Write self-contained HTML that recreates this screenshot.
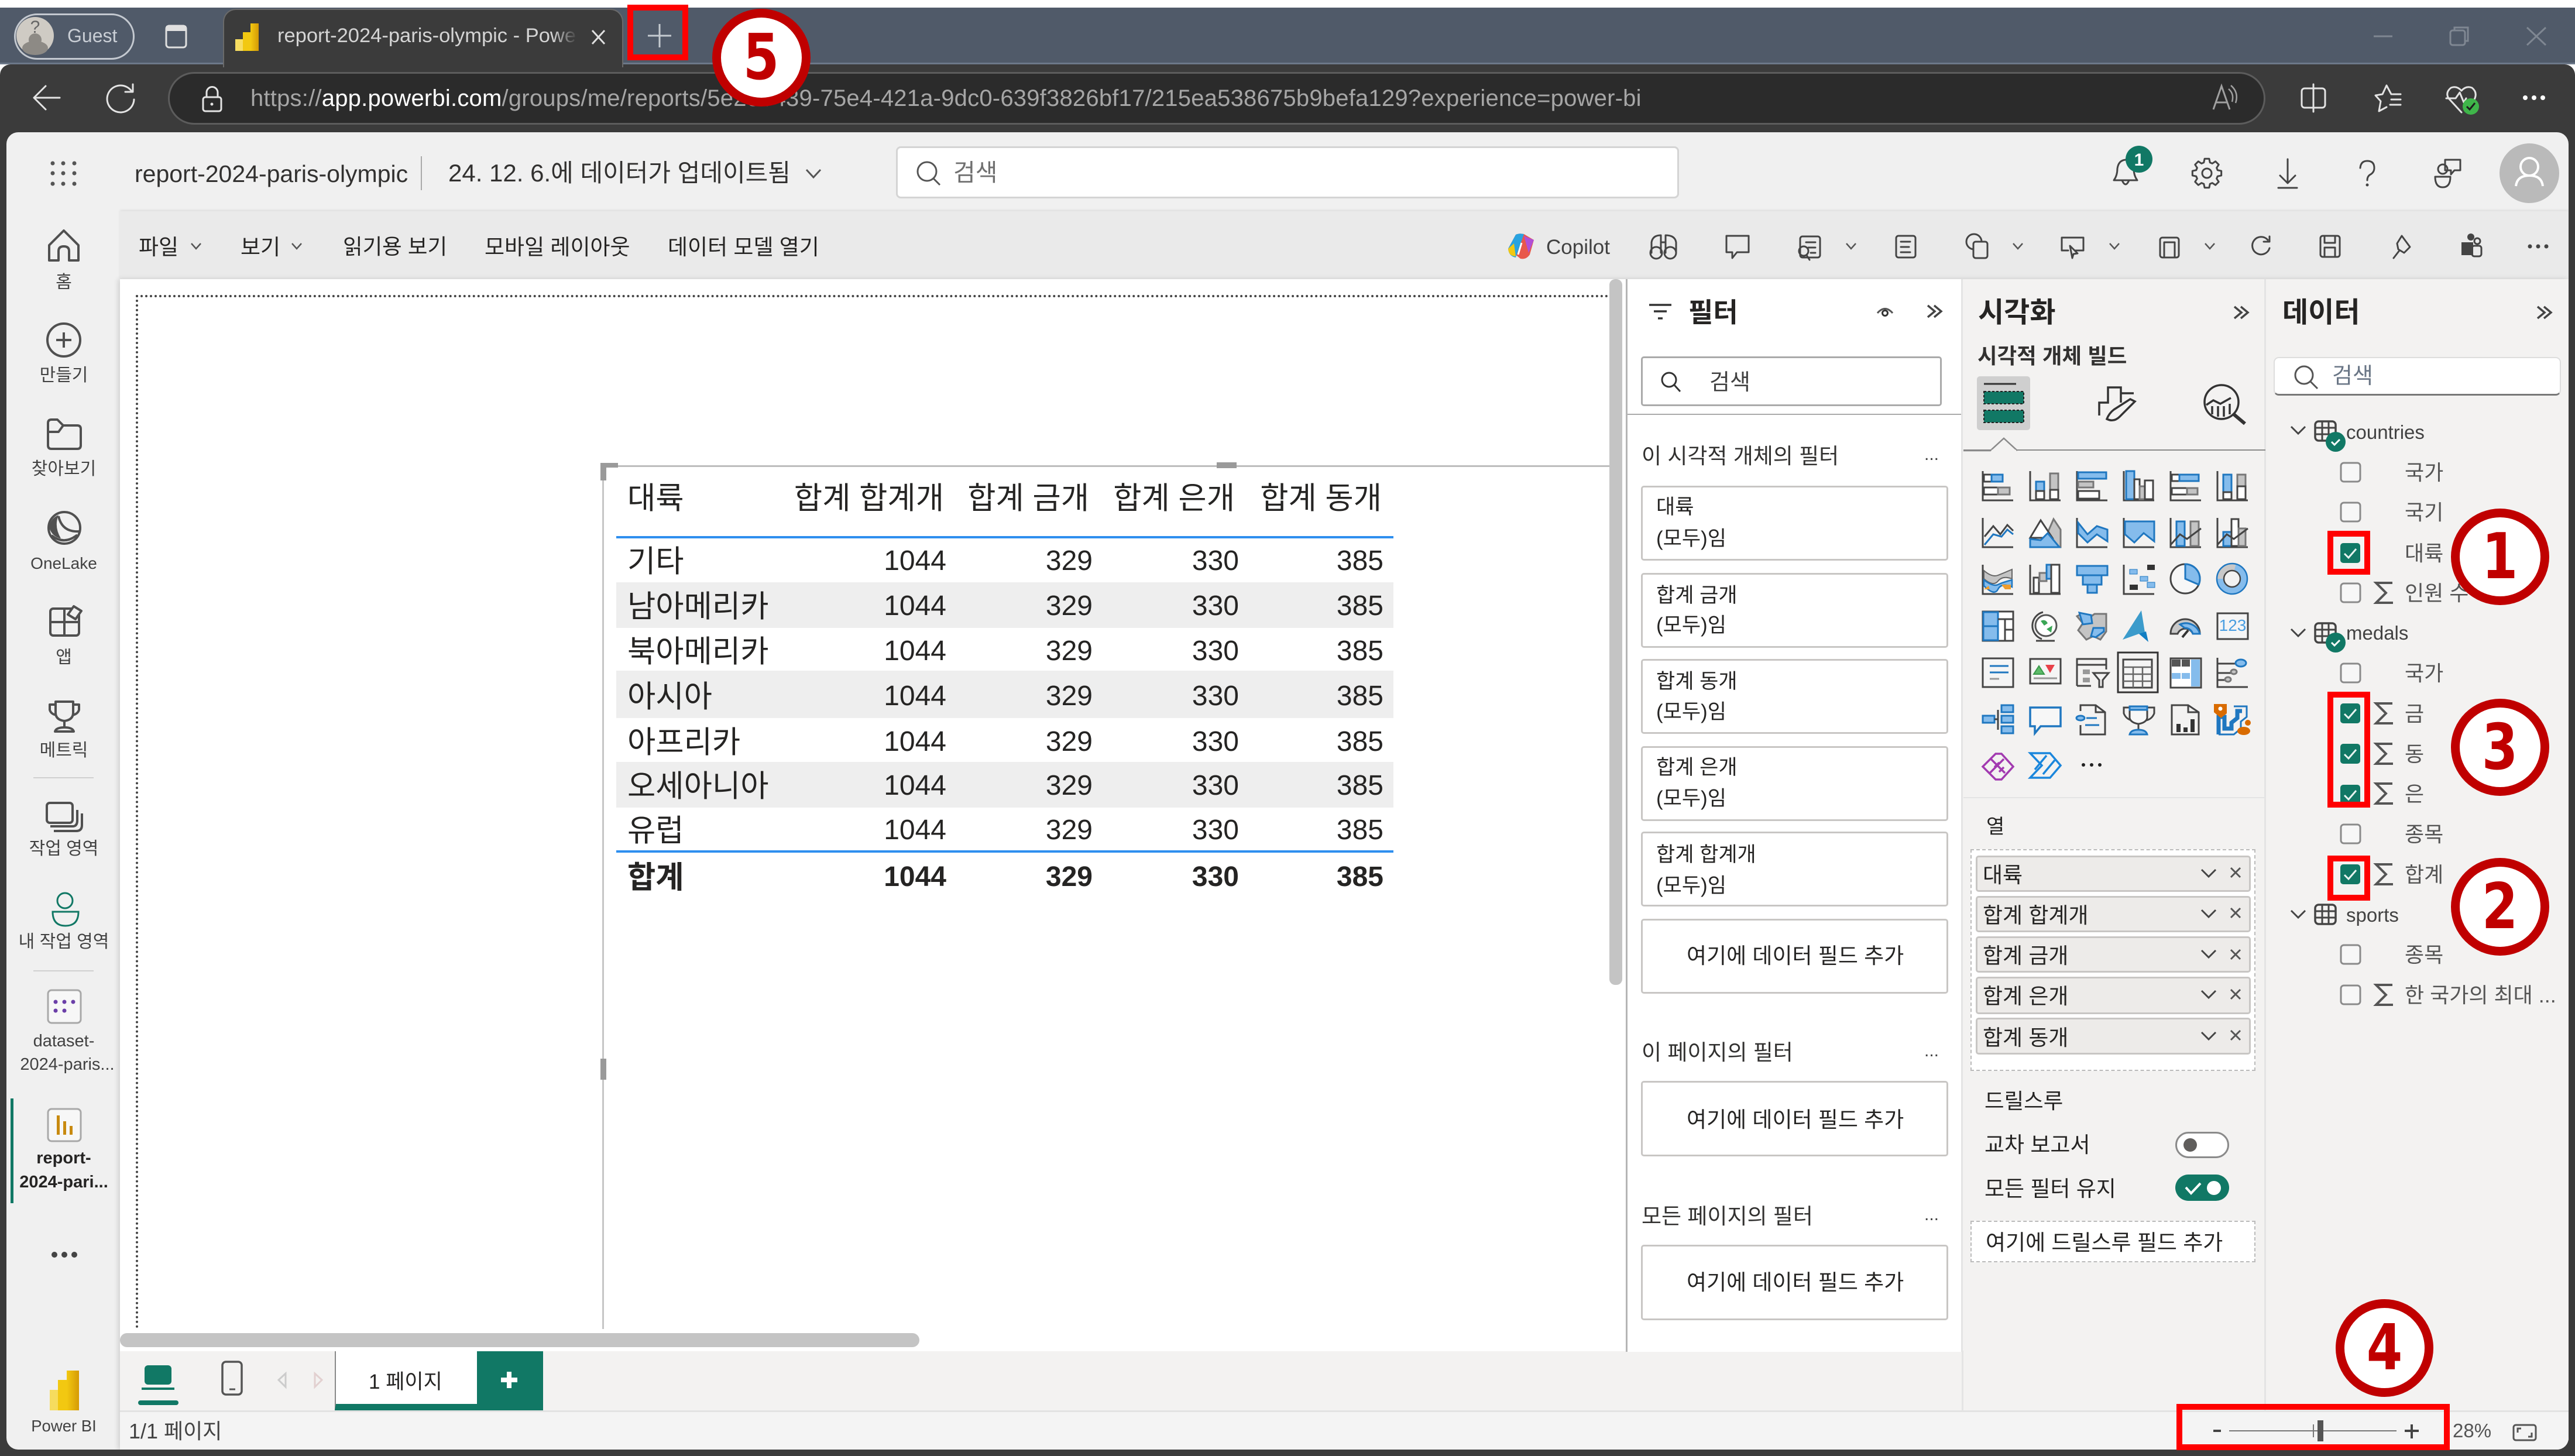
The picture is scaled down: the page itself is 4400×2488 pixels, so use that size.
<!DOCTYPE html>
<html lang="ko"><head><meta charset="utf-8"><title>report-2024-paris-olympic</title>
<style>
html,body{margin:0;padding:0}
body{width:4400px;height:2488px;position:relative;overflow:hidden;background:#fff;font-family:"Liberation Sans","Noto Sans CJK KR",sans-serif;color:#252423}
.b{position:absolute;box-sizing:border-box}
.t{position:absolute;line-height:1;white-space:nowrap}
.n{position:absolute;line-height:1;white-space:nowrap;left:11px;width:196px;text-align:center;font-size:30px;color:#424242}
.card{position:absolute;box-sizing:border-box;left:2804px;width:525px;background:#fff;border:3px solid #c8c6c4;border-radius:5px}
.fld{position:absolute;box-sizing:border-box;left:3376px;width:470px;background:#edebe9;border:3px solid #c8c6c4;border-radius:5px}
.red{position:absolute;box-sizing:border-box;border:10px solid #f00;z-index:5}
.circ{position:absolute;box-sizing:border-box;width:168px;background:#fff;border:15px solid #c00000;border-radius:50%;z-index:6;text-align:center;color:#c00000;font:bold 108px "DejaVu Sans",sans-serif;display:flex;align-items:center;justify-content:center}
.circ span{display:block;transform:scaleX(.82)}
.tr{position:absolute;left:0;width:4400px;height:0;font-size:48px;color:#252423}
.tr span{position:absolute;line-height:1;white-space:nowrap}
.c0{left:1072px;font-size:52.5px;margin-top:-1px}.c1{right:2783px}.c2{right:2533px}.c3{right:2283px}.c4{right:2036px}
.h span{font-size:52.5px}
.h .c1{right:2787px}.h .c2{right:2539px}.h .c3{right:2290px}.h .c4{right:2039px}
.tot{font-weight:bold}
svg text{font-family:"Liberation Sans",sans-serif}
.d{fill:none;stroke:#444;stroke-width:3;stroke-linecap:round;stroke-linejoin:round}
.l{fill:none;stroke:#e4e4e4;stroke-width:3;stroke-linecap:round;stroke-linejoin:round}
.a{fill:none;stroke:#444;stroke-width:3}
.bl{fill:#85bcec;stroke:#1f77c0;stroke-width:3}
.gr{fill:#c4c4c4;stroke:#777;stroke-width:3}
.w{fill:#fff;stroke:#444;stroke-width:3}
.li{fill:none;stroke:#1f77c0;stroke-width:3}
</style></head><body>

<!-- browser chrome -->
<div class="b" style="left:0;top:13px;width:4400px;height:97px;background:#505a69;border-bottom:3px solid #6c7889"></div>
<div class="b" style="left:0;top:110px;width:4400px;height:2378px;background:#3b3b3b;border-radius:18px 18px 0 0"></div>
<div class="b" style="left:381px;top:15px;width:684px;height:100px;background:#3b3b3b;border-radius:22px 22px 0 0;border:2px solid #6a6a6a;border-bottom:0"></div>
<div class="b" style="left:24px;top:23px;width:206px;height:79px;border:3px solid #c4c9d0;border-radius:40px"></div>
<div class="t" style="left:115px;top:45px;font-size:32px;color:#c9ced5">Guest</div>
<div class="t" style="left:474px;top:44px;font-size:34.500px;color:#d4d4d4;width:511px;overflow:hidden">report-2024-paris-olympic - Power BI</div>
<div class="b" style="left:945px;top:40px;width:42px;height:44px;background:linear-gradient(90deg,rgba(59,59,59,0),#3b3b3b)"></div>
<div class="b" style="left:287px;top:123px;width:3584px;height:90px;background:#2b2b2b;border:3px solid #5c5c5c;border-radius:45px"></div>
<div class="t" style="left:428px;top:148px;font-size:40px;letter-spacing:.21px;color:#a6a6a6">https://<span style="color:#fff">app.powerbi.com</span>/groups/me/reports/5e2e5439-75e4-421a-9dc0-639f3826bf17/215ea538675b9befa129?experience=power-bi</div>

<!-- app -->
<div class="b" style="left:0;top:0;width:4400px;height:2488px;clip-path:inset(226px 11px 11px 11px round 20px)">
  <div class="b" style="left:11px;top:226px;width:4378px;height:2251px;background:#f0f0f0"></div>
  <div class="b" style="left:205px;top:361px;width:4184px;height:116px;background:#eaeaea;box-shadow:0 -2px 4px rgba(0,0,0,.08)"></div>
  <div class="b" style="left:205px;top:477px;width:4184px;height:2000px;background:#fff;box-shadow:-3px 0 8px rgba(0,0,0,.14)"></div>
  <div class="b" style="left:205px;top:2309px;width:4184px;height:168px;background:#f3f2f1"></div>
  <div class="b" style="left:205px;top:2410px;width:4184px;height:67px;background:#f4f4f4;border-top:3px solid #e3e3e3"></div>
  <div class="b" style="left:2778px;top:477px;width:576px;height:1833px;background:#fff;border-left:3px solid #b5b5b5;border-right:3px solid #e4e4e4"></div>
  <div class="b" style="left:3354px;top:477px;width:518px;height:1933px;background:#f3f2f1;border-right:3px solid #e4e4e4"></div>
  <div class="b" style="left:3872px;top:477px;width:517px;height:1933px;background:#f3f2f1"></div>
  <div class="b" style="left:3352px;top:2308px;width:3px;height:102px;background:#e4e4e4"></div>
</div>

<!-- canvas -->
<div class="b" style="left:232px;top:504px;width:2518px;height:0;border-top:4px dotted #444"></div>
<div class="b" style="left:232px;top:504px;width:0;height:1767px;border-left:4px dotted #444"></div>
<div class="b" style="left:2750px;top:477px;width:22px;height:1206px;background:#c4c4c4;border-radius:10px"></div>
<div class="b" style="left:205px;top:2278px;width:1366px;height:24px;background:#c4c4c4;border-radius:12px"></div>

<!-- table visual -->
<div class="b" style="left:1028px;top:795px;width:1722px;height:3px;background:#bdbdbd"></div>
<div class="b" style="left:1029px;top:796px;width:3px;height:1475px;background:#c6c6c6"></div>
<div class="b" style="left:1026px;top:791px;width:30px;height:8px;background:#9a9a9a"></div>
<div class="b" style="left:1026px;top:791px;width:10px;height:30px;background:#9a9a9a"></div>
<div class="b" style="left:2079px;top:790px;width:34px;height:10px;background:#9a9a9a"></div>
<div class="b" style="left:1026px;top:1809px;width:10px;height:36px;background:#9a9a9a"></div>
<div class="b" style="left:1053px;top:995px;width:1328px;height:78px;background:#eee"></div>
<div class="b" style="left:1053px;top:1146px;width:1328px;height:81px;background:#eee"></div>
<div class="b" style="left:1053px;top:1302px;width:1328px;height:78px;background:#eee"></div>
<div class="b" style="left:1053px;top:916px;width:1328px;height:4px;background:#2e8fef"></div>
<div class="b" style="left:1053px;top:1453px;width:1328px;height:4px;background:#2e8fef"></div>
<div class="tr h" style="top:826px"><span class="c0" style="margin-top:0">대륙</span><span class="c1">합계 합계개</span><span class="c2">합계 금개</span><span class="c3">합계 은개</span><span class="c4">합계 동개</span></div>
<div class="tr" style="top:935px"><span class="c0">기타</span><span class="c1">1044</span><span class="c2">329</span><span class="c3">330</span><span class="c4">385</span></div>
<div class="tr" style="top:1012px"><span class="c0">남아메리카</span><span class="c1">1044</span><span class="c2">329</span><span class="c3">330</span><span class="c4">385</span></div>
<div class="tr" style="top:1089px"><span class="c0">북아메리카</span><span class="c1">1044</span><span class="c2">329</span><span class="c3">330</span><span class="c4">385</span></div>
<div class="tr" style="top:1166px"><span class="c0">아시아</span><span class="c1">1044</span><span class="c2">329</span><span class="c3">330</span><span class="c4">385</span></div>
<div class="tr" style="top:1244px"><span class="c0">아프리카</span><span class="c1">1044</span><span class="c2">329</span><span class="c3">330</span><span class="c4">385</span></div>
<div class="tr" style="top:1319px"><span class="c0">오세아니아</span><span class="c1">1044</span><span class="c2">329</span><span class="c3">330</span><span class="c4">385</span></div>
<div class="tr" style="top:1395px"><span class="c0">유럽</span><span class="c1">1044</span><span class="c2">329</span><span class="c3">330</span><span class="c4">385</span></div>
<div class="tr tot" style="top:1475px"><span class="c0">합계</span><span class="c1">1044</span><span class="c2">329</span><span class="c3">330</span><span class="c4">385</span></div>

<!-- header text -->
<div class="t" style="left:230px;top:277px;font-size:41px;color:#323130">report-2024-paris-olympic</div>
<div class="b" style="left:719px;top:267px;width:2px;height:58px;background:#aaa"></div>
<div class="t" style="left:766px;top:275px;font-size:42px;color:#323130">24. 12. 6.에 데이터가 업데이트됨</div>
<div class="b" style="left:1531px;top:250px;width:1338px;height:89px;background:#fff;border:3px solid #d4d4d4;border-radius:8px"></div>
<div class="t" style="left:1629px;top:275px;font-size:41px;color:#707070">검색</div>

<!-- ribbon text -->
<div class="t" style="left:237px;top:404px;font-size:37px">파일</div>
<div class="t" style="left:411px;top:404px;font-size:37px">보기</div>
<div class="t" style="left:586px;top:404px;font-size:36.500px">읽기용 보기</div>
<div class="t" style="left:828px;top:404px;font-size:37px">모바일 레이아웃</div>
<div class="t" style="left:1141px;top:404px;font-size:37px">데이터 모델 열기</div>
<div class="t" style="left:2642px;top:405px;font-size:35px;color:#424242">Copilot</div>

<!-- left nav text -->
<div class="n" style="top:468px">홈</div>
<div class="n" style="top:627px">만들기</div>
<div class="n" style="top:787px">찾아보기</div>
<div class="n" style="top:949px;font-size:28px">OneLake</div>
<div class="n" style="top:1109px">앱</div>
<div class="n" style="top:1268px">메트릭</div>
<div class="b" style="left:57px;top:1328px;width:103px;height:2px;background:#d0d0d0"></div>
<div class="n" style="top:1436px">작업 영역</div>
<div class="n" style="top:1595px">내 작업 영역</div>
<div class="b" style="left:57px;top:1658px;width:103px;height:2px;background:#d0d0d0"></div>
<div class="n" style="top:1765px;font-size:29px">dataset-</div>
<div class="n" style="top:1805px;left:17px;font-size:29px">2024-paris...</div>
<div class="n" style="top:1965px;font-weight:bold;color:#252423;font-size:29px">report-</div>
<div class="n" style="top:2006px;font-weight:bold;color:#252423;font-size:29px">2024-pari...</div>
<div class="b" style="left:18px;top:1877px;width:5px;height:179px;background:#117865"></div>
<div class="n" style="top:2423px;font-size:27.500px">Power BI</div>

<!-- pages bar -->
<div class="b" style="left:572px;top:2309px;width:243px;height:101px;background:#fff;border-left:2px solid #888;border-bottom:11px solid #117865"></div>
<div class="b" style="left:815px;top:2309px;width:113px;height:101px;background:#117865"></div>
<div class="t" style="left:630px;top:2344px;font-size:35px">1 페이지</div>
<div class="t" style="left:220px;top:2428px;font-size:36px;color:#424242">1/1 페이지</div>
<div class="t" style="left:4191px;top:2428px;font-size:33px;color:#555">28%</div>

<!-- filter pane -->
<div class="t" style="left:2885px;top:511px;font-size:46px;font-weight:bold">필터</div>
<div class="b" style="left:2804px;top:609px;width:514px;height:85px;background:#fff;border:3px solid #aaa;border-radius:5px"></div>
<div class="t" style="left:2921px;top:635px;font-size:38px;color:#424242">검색</div>
<div class="b" style="left:2781px;top:707px;width:570px;height:2px;background:#aaa"></div>
<div class="t" style="left:2805px;top:761px;font-size:37px;color:#323130">이 시각적 개체의 필터</div>
<div class="t" style="left:3288px;top:762px;font-size:30px;letter-spacing:0;color:#444">...</div>
<div class="card" style="top:830px;height:128px"></div>
<div class="t" style="left:2830px;top:849px;font-size:35px">대륙</div><div class="t" style="left:2830px;top:903px;font-size:35px">(모두)임</div>
<div class="card" style="top:979px;height:128px"></div>
<div class="t" style="left:2830px;top:1000px;font-size:35px">합계 금개</div><div class="t" style="left:2830px;top:1051px;font-size:35px">(모두)임</div>
<div class="card" style="top:1126px;height:128px"></div>
<div class="t" style="left:2830px;top:1147px;font-size:35px">합계 동개</div><div class="t" style="left:2830px;top:1199px;font-size:35px">(모두)임</div>
<div class="card" style="top:1275px;height:128px"></div>
<div class="t" style="left:2830px;top:1294px;font-size:35px">합계 은개</div><div class="t" style="left:2830px;top:1347px;font-size:35px">(모두)임</div>
<div class="card" style="top:1421px;height:128px"></div>
<div class="t" style="left:2830px;top:1443px;font-size:35px">합계 합계개</div><div class="t" style="left:2830px;top:1496px;font-size:35px">(모두)임</div>
<div class="card" style="top:1570px;height:128px"></div>
<div class="t" style="left:2882px;top:1615px;font-size:37px">여기에 데이터 필드 추가</div>
<div class="t" style="left:2805px;top:1780px;font-size:37px;color:#323130">이 페이지의 필터</div>
<div class="t" style="left:3288px;top:1781px;font-size:30px;color:#444">...</div>
<div class="card" style="top:1847px;height:129px"></div>
<div class="t" style="left:2882px;top:1895px;font-size:37px">여기에 데이터 필드 추가</div>
<div class="t" style="left:2805px;top:2060px;font-size:37px;color:#323130">모든 페이지의 필터</div>
<div class="t" style="left:3288px;top:2061px;font-size:30px;color:#444">...</div>
<div class="card" style="top:2127px;height:129px"></div>
<div class="t" style="left:2882px;top:2173px;font-size:37px">여기에 데이터 필드 추가</div>

<!-- viz pane -->
<div class="t" style="left:3380px;top:511px;font-size:48px;font-weight:bold">시각화</div>
<div class="t" style="left:3379px;top:591px;font-size:36.500px;font-weight:bold;color:#323130">시각적 개체 빌드</div>
<div class="b" style="left:3378px;top:643px;width:91px;height:92px;background:#cfcfcf;border-radius:5px"></div>
<div class="b" style="left:3355px;top:768px;width:516px;height:2px;background:#8a8a8a"></div>
<div class="b" style="left:3355px;top:1362px;width:516px;height:2px;background:#e4e4e4"></div>
<div class="t" style="left:3394px;top:1396px;font-size:34px">열</div>
<div class="b" style="left:3367px;top:1451px;width:487px;height:379px;background:#fff;border:2px dashed #bbb"></div>
<div class="fld" style="top:1462px;height:62px"></div>
<div class="fld" style="top:1531px;height:62px"></div>
<div class="fld" style="top:1600px;height:62px"></div>
<div class="fld" style="top:1669px;height:64px"></div>
<div class="fld" style="top:1739px;height:63px"></div>
<div class="t" style="left:3388px;top:1477px;font-size:37px">대륙</div>
<div class="t" style="left:3388px;top:1546px;font-size:37px">합계 합계개</div>
<div class="t" style="left:3388px;top:1615px;font-size:37px">합계 금개</div>
<div class="t" style="left:3388px;top:1684px;font-size:37px">합계 은개</div>
<div class="t" style="left:3388px;top:1755px;font-size:37px">합계 동개</div>
<div class="t" style="left:3391px;top:1864px;font-size:36.500px">드릴스루</div>
<div class="t" style="left:3391px;top:1938px;font-size:37px">교차 보고서</div>
<div class="t" style="left:3391px;top:2013px;font-size:37px">모든 필터 유지</div>
<div class="b" style="left:3717px;top:1934px;width:92px;height:45px;background:#fff;border:3px solid #8a8a8a;border-radius:23px"></div>
<div class="b" style="left:3731px;top:1945px;width:23px;height:23px;background:#605e5c;border-radius:50%"></div>
<div class="b" style="left:3717px;top:2007px;width:92px;height:45px;background:#117865;border-radius:23px"></div>
<div class="b" style="left:3771px;top:2018px;width:24px;height:24px;background:#fff;border-radius:50%"></div>
<div class="b" style="left:3367px;top:2086px;width:487px;height:71px;background:#fff;border:2px dashed #bbb"></div>
<div class="t" style="left:3393px;top:2105px;font-size:37px">여기에 드릴스루 필드 추가</div>

<!-- data pane -->
<div class="t" style="left:3900px;top:511px;font-size:48px;font-weight:bold">데이터</div>
<div class="b" style="left:3885px;top:610px;width:491px;height:66px;background:#fff;border:2px solid #ddd;border-bottom:3px solid #777;border-radius:9px"></div>
<div class="t" style="left:3985px;top:624px;font-size:38px;color:#6a7686">검색</div>
<div class="t" style="left:4009px;top:722px;font-size:33px;color:#424242">countries</div>
<div class="t" style="left:4009px;top:1065px;font-size:33px;color:#424242">medals</div>
<div class="t" style="left:4009px;top:1547px;font-size:33px;color:#424242">sports</div>
<div class="t" style="left:4109px;top:790px;font-size:36px;color:#555">국가</div>
<div class="t" style="left:4109px;top:858px;font-size:36px;color:#555">국기</div>
<div class="t" style="left:4109px;top:928px;font-size:36px;color:#555">대륙</div>
<div class="t" style="left:4109px;top:996px;font-size:36px;color:#555">인원 수</div>
<div class="t" style="left:4109px;top:1133px;font-size:36px;color:#555">국가</div>
<div class="t" style="left:4109px;top:1202px;font-size:36px;color:#555">금</div>
<div class="t" style="left:4109px;top:1271px;font-size:36px;color:#555">동</div>
<div class="t" style="left:4109px;top:1339px;font-size:36px;color:#555">은</div>
<div class="t" style="left:4109px;top:1408px;font-size:36px;color:#555">종목</div>
<div class="t" style="left:4109px;top:1477px;font-size:36px;color:#555">합계</div>
<div class="t" style="left:4109px;top:1614px;font-size:36px;color:#555">종목</div>
<div class="t" style="left:4109px;top:1683px;font-size:36px;color:#555">한 국가의 최대 ...</div>

<!-- icon layer -->
<svg class="b" style="left:0;top:0" width="4400" height="2488" viewBox="0 0 4400 2488">
<defs>
<linearGradient id="pb" x1="0" y1="0" x2="1" y2="0"><stop offset="0" stop-color="#f3c911"/><stop offset="1" stop-color="#d59a06"/></linearGradient>
<g id="cb"><rect x="-16" y="-16" width="33" height="32" rx="5" fill="#f7f7f7" stroke="#8a8a8a" stroke-width="3"/></g>
<g id="ck"><rect x="-17" y="-17" width="34" height="34" rx="5" fill="#117865"/><path d="M-10 1L-3 8L10-7" fill="none" stroke="#e8f4f0" stroke-width="3"/></g>
<path id="sg" d="M14-17H-14L3 0L-14 17H15" fill="none" stroke="#555" stroke-width="4"/>
<g id="tb"><rect x="0" y="0" width="35" height="33" rx="6" fill="none" stroke="#444" stroke-width="3.5"/><path d="M0 11H35M0 22H35M12 0V33M23 0V33" stroke="#444" stroke-width="3"/></g>
<g id="bd"><circle r="17" fill="#117865"/><path d="M-7 0L-2 5L7-4" fill="none" stroke="#fff" stroke-width="3"/></g>
<path id="cv" d="M-12-6L0 6L12-6" fill="none" stroke="#444" stroke-width="3"/>
<path id="cs" d="M-8-5L0 4L8-5" fill="none" stroke="#555" stroke-width="2.5"/>
<path id="xx" d="M-8-8L8 8M8-8L-8 8" stroke="#555" stroke-width="3"/>
<path id="dc" d="M-12-10L0 0L-12 10M-1-10L11 0L-1 10" fill="none" stroke="#444" stroke-width="3.5"/>
</defs>

<!-- chrome icons -->
<circle cx="60" cy="61" r="32" fill="#cfcbc4"/><circle cx="60" cy="48" r="15" fill="#cfcbc4"/><ellipse cx="60" cy="82" rx="22" ry="12" fill="#8d8a85"/><circle cx="60" cy="68" r="11" fill="#8d8a85"/>
<text x="60" y="56" font-size="30" text-anchor="middle" fill="#666">?</text>
<rect x="284" y="44" width="34" height="37" rx="5" fill="none" stroke="#e0e0e0" stroke-width="3"/><rect x="284" y="44" width="34" height="9" fill="#e0e0e0"/>
<rect x="402" y="67" width="14" height="20" fill="#f7dd62"/><rect x="415" y="55" width="14" height="32" fill="#f2c811"/><rect x="428" y="40" width="14" height="47" fill="url(#pb)"/>
<path d="M1012 52L1033 75M1033 52L1012 75" stroke="#e0e0e0" stroke-width="3"/>
<path d="M1127 41V81M1107 61H1147" stroke="#c5cad0" stroke-width="3"/>
<path d="M4056 62H4088" stroke="#7f8792" stroke-width="3"/>
<rect x="4187" y="52" width="25" height="25" rx="4" fill="none" stroke="#7f8792" stroke-width="3"/><path d="M4194 52V47H4217V70H4212" fill="none" stroke="#7f8792" stroke-width="3"/>
<path d="M4318 47L4350 77M4350 47L4318 77" stroke="#7f8792" stroke-width="3"/>
<path class="l" d="M102 167H59M78 147L58 167L78 187"/>
<path class="l" d="M225 156A23 23 0 1 0 229 170M227 144V157H214"/>
<rect x="347" y="166" width="31" height="24" rx="4" class="l"/><path class="l" d="M353 166V158A9.500 9.500 0 0 1 372 158V166"/><circle cx="362" cy="178" r="2.500" fill="#e4e4e4"/>
<path d="M3782 187L3796 147L3810 187M3787 175H3805" fill="none" stroke="#a0a0a0" stroke-width="3"/><path d="M3808 152Q3818 160 3814 174M3812 146Q3826 158 3820 176" fill="none" stroke="#a0a0a0" stroke-width="2.500"/>
<rect x="3933" y="151" width="40" height="33" rx="5" class="l"/><path class="l" d="M3953 144V191"/>
<path class="l" d="M4086 161L4078 146L4071 161L4059 163L4068 173L4065 190L4078 183M4088 161H4102M4086 170H4102M4084 179H4102"/>
<path class="l" d="M4206 192L4184 168Q4178 158 4188 150Q4198 146 4206 155Q4214 146 4224 150Q4234 158 4228 170M4180 168H4196L4203 158L4210 175L4214 168"/><circle cx="4222" cy="182" r="14" fill="#3fb54a"/><path d="M4215 182L4220 187L4229 176" fill="none" stroke="#1d1d1d" stroke-width="3"/>
<circle cx="4315" cy="167" r="4" fill="#fff"/><circle cx="4330" cy="167" r="4" fill="#fff"/><circle cx="4345" cy="167" r="4" fill="#fff"/>

<!-- header icons -->
<g fill="#555"><circle cx="90" cy="279" r="3.500"/><circle cx="108" cy="279" r="3.500"/><circle cx="127" cy="279" r="3.500"/><circle cx="90" cy="296" r="3.500"/><circle cx="108" cy="296" r="3.500"/><circle cx="127" cy="296" r="3.500"/><circle cx="90" cy="314" r="3.500"/><circle cx="108" cy="314" r="3.500"/><circle cx="127" cy="314" r="3.500"/></g>
<path d="M1378 290L1390 303L1402 290" fill="none" stroke="#555" stroke-width="3"/>
<circle cx="1584" cy="293" r="16" fill="none" stroke="#555" stroke-width="3"/><path d="M1595 305L1606 316" stroke="#555" stroke-width="3"/>
<path class="d" d="M3612 308Q3618 300 3618 288Q3620 274 3632 273Q3644 274 3646 288Q3646 300 3652 308ZM3626 308Q3632 322 3638 308"/>
<g transform="translate(3771 296)"><circle r="8" class="d"/><polygon class="d" points="18.26,-5.24 24.69,-3.91 24.69,3.91 18.26,5.24 16.62,9.21 20.23,14.69 14.69,20.23 9.21,16.62 5.24,18.26 3.91,24.69 -3.91,24.69 -5.24,18.26 -9.21,16.62 -14.69,20.23 -20.23,14.69 -16.62,9.21 -18.26,5.24 -24.69,3.91 -24.69,-3.91 -18.26,-5.24 -16.62,-9.21 -20.23,-14.69 -14.69,-20.23 -9.21,-16.62 -5.24,-18.26 -3.91,-24.69 3.91,-24.69 5.24,-18.26 9.21,-16.62 14.69,-20.23 20.23,-14.69 16.62,-9.21"/></g>
<path class="d" d="M3909 272V312M3896 300L3909 313L3922 300M3893 321H3925"/>
<path class="d" d="M4033 287Q4034 275 4045 275Q4057 275 4057 287Q4057 295 4049 299Q4045 302 4045 308"/><circle cx="4045" cy="316" r="2.500" fill="#444"/>
<circle cx="4174" cy="289" r="8" class="d"/><path class="d" d="M4161 302H4187Q4187 320 4174 320Q4161 320 4161 302ZM4178 273H4204V291H4194L4188 298V291H4178Z"/>
<circle cx="3655" cy="272" r="23" fill="#117865"/><text x="3655" y="283" font-size="30" font-weight="bold" text-anchor="middle" fill="#fff">1</text>
<circle cx="4322" cy="296" r="51" fill="#bababa"/><circle cx="4322" cy="285" r="15" fill="none" stroke="#fff" stroke-width="4"/><path d="M4299 318Q4301 300 4322 300Q4343 300 4345 318" fill="none" stroke="#fff" stroke-width="4"/>

<!-- ribbon icons -->
<use href="#cs" x="335" y="421"/><use href="#cs" x="507" y="421"/>
<path d="M2577 425L2590 401Q2596 398 2604 400L2621 410L2614 435Q2608 444 2598 442Z" fill="#e8574b"/><path d="M2577 425L2590 401Q2596 398 2604 400L2590 440Q2578 438 2577 425Z" fill="#29a3e0"/><path d="M2577 425L2587 416L2590 438Q2578 438 2577 425Z" fill="#f2c811"/><path d="M2604 403L2621 410L2612 432Z" fill="#b04fd6"/><path d="M2600 415L2594 435" stroke="#fff" stroke-width="3"/>
<g class="d"><path d="M2822 432V414Q2824 402 2838 402V432M2864 432V414Q2862 402 2846 402V432M2838 414H2846"/><circle cx="2830" cy="432" r="10"/><circle cx="2854" cy="432" r="10"/></g>
<path class="d" d="M2950 403H2988V431H2968L2960 441V431H2950Z"/>
<g class="d"><rect x="3076" y="404" width="34" height="36" rx="4"/><path d="M3086 414H3102M3090 423H3102M3094 432H3102"/><circle cx="3082" cy="429" r="8"/><path d="M3087 436L3092 444"/></g>
<use href="#cs" x="3163" y="421"/>
<g class="d"><rect x="3240" y="403" width="33" height="37" rx="4"/><path d="M3248 413H3264M3248 422H3262M3248 431H3264"/></g>
<g class="d"><circle cx="3373" cy="413" r="13"/><rect x="3372" y="413" width="24" height="28" rx="4" fill="#eaeaea"/></g><use href="#cs" x="3448" y="421"/>
<path class="d" d="M3523 406H3560V428H3546M3523 406V428H3534M3537 420L3550 433L3543 434L3541 441Z"/><use href="#cs" x="3613" y="421"/>
<g class="d"><rect x="3691" y="406" width="32" height="34" rx="4"/><path d="M3698 414H3716M3698 414V440M3716 414V440"/></g><use href="#cs" x="3776" y="421"/>
<path class="d" d="M3875 410A15 15 0 1 0 3878 424M3878 404V413H3868"/>
<g class="d"><rect x="3965" y="403" width="33" height="36" rx="4"/><path d="M3972 403V415H3990V403M3972 439V423H3990V439"/></g>
<path class="d" d="M4104 403L4118 422L4108 432L4098 426L4096 416ZM4100 428L4090 441"/>
<rect x="4206" y="414" width="20" height="22" fill="#444"/><circle cx="4233" cy="412" r="5" class="d"/><rect x="4224" y="420" width="16" height="18" rx="4" class="d"/><circle cx="4222" cy="405" r="6" fill="#444"/>
<circle cx="4323" cy="421" r="3.500" fill="#444"/><circle cx="4337" cy="421" r="3.500" fill="#444"/><circle cx="4351" cy="421" r="3.500" fill="#444"/>

<!-- nav icons -->
<g fill="none" stroke="#505050" stroke-width="4" stroke-linejoin="round">
<path d="M84 445V419L109 394L134 419V445H118V429Q118 421 109 421Q100 421 100 429V445Z"/>
<circle cx="109" cy="581" r="28"/><path d="M96 581H122M109 568V594"/>
<path d="M88 767H132Q138 767 138 761V733Q138 727 132 727H108L98 717H88Q82 717 82 723V761Q82 767 88 767ZM82 738H100L108 727"/>
<circle cx="110" cy="902" r="27"/><path d="M100 882Q106 910 136 908M88 915Q110 932 132 914"/>
<rect x="86" y="1040" width="49" height="46" rx="5"/><path d="M110 1040V1086M86 1063H135"/>
<path d="M95 1199H125V1218Q125 1230 110 1232Q95 1230 95 1218ZM95 1204H85V1213Q87 1220 96 1222M125 1204H135V1213Q133 1220 124 1222M110 1232V1243M94 1250Q96 1243 110 1243Q124 1243 126 1250Z"/>
<rect x="80" y="1372" width="44" height="34" rx="5"/><path d="M86 1412H124Q132 1412 132 1402V1384M92 1420H130Q140 1420 140 1410V1390"/>
</g>
<path d="M116 1050L126 1036L139 1044L129 1058L116 1050Z" fill="#f0f0f0" stroke="#505050" stroke-width="4" stroke-linejoin="round"/>
<path d="M84 902Q86 886 100 880Q92 900 104 920Q90 918 84 902Z" fill="#505050"/>
<g fill="none" stroke="#117865" stroke-width="3"><circle cx="111" cy="1539" r="13"/><path d="M90 1558H134Q134 1582 112 1582Q90 1582 90 1558Z"/></g>
<rect x="82" y="1692" width="56" height="56" rx="6" fill="#f7f7f7" stroke="#a8a8a8" stroke-width="3"/>
<g fill="#6b3fa8"><circle cx="95" cy="1712" r="3.500"/><circle cx="110" cy="1712" r="3.500"/><circle cx="125" cy="1712" r="3.500"/><circle cx="95" cy="1727" r="3.500"/><circle cx="110" cy="1727" r="3.500"/></g>
<rect x="82" y="1895" width="56" height="55" rx="6" fill="#f7f7f7" stroke="#a8a8a8" stroke-width="3"/>
<rect x="97" y="1906" width="5" height="33" fill="#c88a10"/><rect x="108" y="1916" width="5" height="23" fill="#c88a10"/><rect x="119" y="1924" width="5" height="15" fill="#c88a10"/>
<circle cx="93" cy="2144" r="5" fill="#444"/><circle cx="110" cy="2144" r="5" fill="#444"/><circle cx="127" cy="2144" r="5" fill="#444"/>
<rect x="85" y="2375" width="18" height="35" fill="#f6dc5e"/><rect x="99" y="2358" width="19" height="52" fill="#f2c811"/><rect x="114" y="2342" width="21" height="68" fill="url(#pb)"/>

<!-- page-bar icons -->
<rect x="247" y="2333" width="46" height="33" rx="6" fill="#117865"/><rect x="242" y="2371" width="56" height="4" fill="#117865"/><rect x="236" y="2393" width="69" height="8" rx="4" fill="#117865"/>
<rect x="380" y="2327" width="33" height="56" rx="6" fill="none" stroke="#555" stroke-width="3.500"/><path d="M392 2374H402" stroke="#555" stroke-width="3"/>
<path d="M488 2347L476 2358L488 2370Z" fill="none" stroke="#ccc" stroke-width="3"/><path d="M538 2347L550 2358L538 2370Z" fill="none" stroke="#e2d0d0" stroke-width="3"/>
<path d="M870 2344V2372M856 2358H884" stroke="#fff" stroke-width="8"/>
<path d="M3782 2445H3795" stroke="#444" stroke-width="4"/><path d="M3809 2445H4095" stroke="#777" stroke-width="2"/><rect x="3960" y="2427" width="10" height="36" fill="#555"/><path d="M3953 2434V2456" stroke="#777" stroke-width="2"/><path d="M4121 2434V2458M4109 2445H4133" stroke="#444" stroke-width="4"/>
<rect x="4295" y="2435" width="38" height="26" rx="4" fill="none" stroke="#555" stroke-width="3"/><path d="M4302 2448V2441H4308M4326 2448V2455H4320" fill="none" stroke="#555" stroke-width="3"/>

<!-- pane heads -->
<path d="M2818 521H2856M2826 532H2848M2833 544H2841" stroke="#333" stroke-width="3.500"/>
<path d="M3208 535Q3221 520 3234 535" fill="none" stroke="#555" stroke-width="3"/><circle cx="3221" cy="535" r="4.500" fill="none" stroke="#333" stroke-width="3"/>
<use href="#dc" x="3306" y="532"/><use href="#dc" x="3830" y="534"/><use href="#dc" x="4348" y="534"/>
<circle cx="2852" cy="649" r="12" fill="none" stroke="#333" stroke-width="3"/><path d="M2861 658L2871 669" stroke="#333" stroke-width="3"/>
<circle cx="3937" cy="641" r="15" fill="none" stroke="#555" stroke-width="3"/><path d="M3948 652L3960 664" stroke="#555" stroke-width="3"/>

<!-- viz tabs -->
<path d="M3390 656H3445" stroke="#333" stroke-width="3"/>
<rect x="3390" y="669" width="68" height="21" fill="#117865" stroke="#222" stroke-width="2" stroke-dasharray="4 3"/><rect x="3390" y="701" width="68" height="21" fill="#117865" stroke="#222" stroke-width="2" stroke-dasharray="4 3"/>
<g fill="none" stroke="#333" stroke-width="3.500"><path d="M3587 710V688H3602V662H3624V672H3646M3624 672V688"/><path d="M3600 716Q3612 722 3622 712L3648 686L3640 682L3612 700Q3604 706 3600 716Z"/>
<circle cx="3796" cy="687" r="29"/><path d="M3770 692L3782 684L3794 690L3812 680M3780 694V708M3790 694V712M3800 694V712M3810 690V708"/><path d="M3817 708L3836 724" stroke-width="6"/></g>
<path d="M3355 770H3401L3424 749L3447 770" fill="#f3f2f1" stroke="#8a8a8a" stroke-width="2.500"/><path d="M3403 770H3445" stroke="#f3f2f1" stroke-width="3"/>

<!-- viz grid -->
<g transform="translate(3386 803)"><path class="a" d="M2 2V52H54"/><rect class="w" x="4" y="8" width="13" height="12"/><rect class="bl" x="17" y="8" width="19" height="12"/><rect class="w" x="4" y="30" width="24" height="12"/><rect class="gr" x="28" y="30" width="20" height="12"/></g>
<g transform="translate(3467 803)"><path class="a" d="M2 2V52H54"/><rect class="bl" x="12" y="20" width="14" height="16"/><rect class="w" x="12" y="36" width="14" height="14"/><rect class="gr" x="36" y="6" width="14" height="28"/><rect class="w" x="36" y="34" width="14" height="16"/></g>
<g transform="translate(3547 803)"><path class="a" d="M2 2V52H54"/><rect class="bl" x="4" y="4" width="48" height="11"/><rect class="gr" x="4" y="20" width="26" height="10"/><rect class="w" x="4" y="36" width="36" height="13"/></g>
<g transform="translate(3627 803)"><path class="a" d="M2 2V52H54"/><rect class="bl" x="6" y="2" width="14" height="48"/><rect class="w" x="20" y="16" width="9" height="34"/><rect class="gr" x="29" y="28" width="9" height="22"/><rect class="w" x="38" y="18" width="14" height="32"/></g>
<g transform="translate(3707 803)"><path class="a" d="M2 2V52H54"/><rect class="w" x="4" y="8" width="13" height="11"/><rect class="bl" x="17" y="8" width="33" height="11"/><rect class="w" x="4" y="31" width="26" height="11"/><rect class="gr" x="30" y="31" width="18" height="11"/></g>
<g transform="translate(3787 803)"><path class="a" d="M2 2V52H54"/><rect class="bl" x="12" y="8" width="14" height="30"/><rect class="w" x="12" y="38" width="14" height="12"/><rect class="gr" x="36" y="8" width="14" height="20"/><rect class="w" x="36" y="28" width="14" height="22"/></g>

<g transform="translate(3386 883)"><path class="a" d="M2 2V52H54"/><path class="a" d="M5 34L20 16L32 30L44 14L54 24"/><path class="li" d="M5 48L20 30L34 34L44 22L54 30"/></g>
<g transform="translate(3467 883)"><path class="gr" d="M28 36L42 4L54 22V52H40Z"/><path class="w" d="M2 36L20 6L40 36Z" stroke="#555"/><path class="bl" d="M2 52V38L20 40L32 28L52 52Z"/></g>
<g transform="translate(3547 883)"><path class="a" d="M2 2V52H54"/><path class="bl" d="M4 10L20 30L36 16L54 22V42L36 30L20 44L4 28Z"/></g>
<g transform="translate(3627 883)"><path class="a" d="M2 2V52H54"/><path class="bl" d="M4 8H54V42L36 28L20 44L4 30Z"/></g>
<g transform="translate(3707 883)"><path class="a" d="M2 2V52H54"/><rect class="bl" x="12" y="8" width="14" height="42"/><rect class="gr" x="36" y="8" width="14" height="42"/><path class="a" d="M2 48L18 30L30 38L54 20"/></g>
<g transform="translate(3787 883)"><path class="a" d="M2 2V52H54"/><rect class="bl" x="12" y="26" width="14" height="24"/><rect class="w" x="26" y="4" width="12" height="46"/><rect class="gr" x="38" y="20" width="12" height="30"/><path class="a" d="M2 48L18 30L30 38L54 20"/></g>

<g transform="translate(3386 963)"><path class="a" d="M2 2V52H54"/><path d="M4 12Q18 24 28 20T52 10V26Q36 20 28 30T4 26Z" fill="#c4c4c4" stroke="#666" stroke-width="2"/><path d="M4 28Q20 40 28 36T52 28V40Q34 32 28 44T4 38Z" fill="#85bcec" stroke="#1f77c0" stroke-width="2.500"/><path d="M4 44H14L12 38ZM34 36H50V44H40Z" fill="#ef9d2e"/></g>
<g transform="translate(3467 963)"><path class="a" d="M2 2V52H54"/><rect class="w" x="8" y="24" width="9" height="26"/><rect class="gr" x="18" y="16" width="12" height="14"/><rect class="bl" x="30" y="2" width="8" height="24"/><rect class="w" x="38" y="2" width="14" height="48"/></g>
<g transform="translate(3547 963)"><path class="bl" d="M2 4H54V20H44V36H36V50H20V36H12V20H2Z"/><path class="li" d="M12 20H44M20 36H36"/></g>
<g transform="translate(3627 963)"><path class="a" d="M2 2V52H54"/><rect x="12" y="10" width="13" height="8" fill="#85bcec" stroke="#1f77c0" stroke-width="1"/><rect x="30" y="22" width="13" height="8" fill="#85bcec" stroke="#1f77c0" stroke-width="1"/><rect x="42" y="2" width="13" height="9" fill="#333"/><rect x="12" y="36" width="14" height="9" fill="#333"/><rect x="42" y="32" width="13" height="9" fill="#85bcec" stroke="#1f77c0" stroke-width="1"/></g>
<g transform="translate(3707 963)"><circle cx="27" cy="26" r="25" fill="#f7f7f7" stroke="#444" stroke-width="3"/><path class="bl" d="M27 26V1A25 25 0 0 1 50 36Z"/></g>
<g transform="translate(3787 963)"><circle cx="27" cy="26" r="20" fill="none" stroke="#c8c8c8" stroke-width="11"/><path d="M7 26A20 20 0 1 0 47 26A20 20 0 0 0 32 7" fill="none" stroke="#85bcec" stroke-width="11"/><circle cx="27" cy="26" r="26" fill="none" stroke="#1f77c0" stroke-width="2.500"/><circle cx="27" cy="26" r="14" fill="none" stroke="#444" stroke-width="2.500"/></g>

<g transform="translate(3386 1043)"><rect x="2" y="2" width="52" height="50" fill="#fff" stroke="#444" stroke-width="3"/><rect x="3" y="3" width="25" height="24" class="bl"/><rect x="3" y="27" width="25" height="24" class="bl"/><path class="a" d="M28 15H54M40 15V52M40 33H54"/></g>
<g transform="translate(3467 1043)"><circle cx="29" cy="26" r="18" fill="#fff" stroke="#555" stroke-width="3"/><path d="M20 18Q28 14 32 22L26 26ZM30 32L40 26L38 38Z" fill="#3aa655"/><path class="a" d="M24 3A24 24 0 0 0 22 49M12 52H44"/></g>
<g transform="translate(3547 1043)"><path class="gr" d="M2 10L12 22L4 34L18 50L30 44L42 50L52 36V6H32L24 12L10 6Z"/><path class="bl" d="M6 4L26 8L28 22L12 24ZM30 30H48V36L34 46L26 44Z"/></g>
<g transform="translate(3627 1043)"><path d="M0 50L32 0L40 50L28 40Z" fill="#3b9bcb"/><path d="M28 40L40 36L44 54Z" fill="#117ec2"/></g>
<g transform="translate(3707 1043)"><path d="M2 40A25 25 0 0 1 52 40H40A14 14 0 0 0 14 40Z" fill="#c8c8c8" stroke="#444" stroke-width="3"/><path class="bl" d="M18 24A25 25 0 0 1 52 40H40A14 14 0 0 0 26 30Z"/><path d="M22 46L32 34" stroke="#333" stroke-width="4"/></g>
<g transform="translate(3787 1043)"><rect x="2" y="5" width="52" height="44" fill="#f5f5f5" stroke="#444" stroke-width="3"/><text x="28" y="35" font-size="28" text-anchor="middle" fill="#4a9ee0">123</text></g>

<g transform="translate(3386 1122)"><rect x="2" y="3" width="52" height="49" fill="#f5f5f5" stroke="#444" stroke-width="3"/><path d="M14 16H46M14 27H46" stroke="#1f77c0" stroke-width="3"/><path d="M14 38H30" stroke="#999" stroke-width="3"/></g>
<g transform="translate(3467 1122)"><rect x="2" y="4" width="52" height="42" fill="#f5f5f5" stroke="#444" stroke-width="3"/><path d="M8 30L17 16L26 30Z" fill="#5dbb6a" stroke="#3a9a4b" stroke-width="2"/><path d="M28 14H44L36 28Z" fill="#e8414a"/><path d="M8 37H48" stroke="#999" stroke-width="3"/></g>
<g transform="translate(3547 1122)"><path class="a" d="M2 50V4H52V22M2 50H26M2 14H52"/><rect x="12" y="22" width="12" height="8" fill="#999"/><rect x="12" y="36" width="12" height="8" fill="#999"/><path d="M30 28H56L46 40V52H40V40Z" fill="#f3f2f1" stroke="#444" stroke-width="3"/></g>
<rect x="3619" y="1115" width="68" height="68" fill="none" stroke="#333" stroke-width="3"/>
<g transform="translate(3628 1127)"><rect x="0" y="0" width="49" height="48" fill="#f5f5f5" stroke="#444" stroke-width="3"/><path d="M0 13H49M0 25H49M0 37H49M17 13V48M33 13V48" stroke="#666" stroke-width="2.500"/></g>
<g transform="translate(3707 1122)"><rect x="2" y="3" width="52" height="50" fill="#fff" stroke="#444" stroke-width="3"/><rect x="4" y="5" width="48" height="12" fill="#555"/><rect x="36" y="5" width="16" height="46" fill="#85bcec"/><rect x="4" y="28" width="48" height="10" fill="#85bcec"/><path d="M20 5V51M36 5V51" stroke="#fff" stroke-width="2"/></g>
<g transform="translate(3787 1122)"><path class="a" d="M2 2V52H54M2 12H40M2 28H28M2 40H18" /><ellipse cx="42" cy="11" rx="9" ry="6" class="bl"/><ellipse cx="30" cy="26" rx="5" ry="4" class="gr"/><ellipse cx="20" cy="39" rx="5" ry="4" class="gr"/></g>

<g transform="translate(3386 1203)"><rect x="2" y="20" width="20" height="12" class="bl"/><path class="a" d="M22 26H28M28 10V44"/><rect x="34" y="2" width="20" height="12" class="bl"/><rect x="34" y="20" width="20" height="12" class="bl"/><rect x="34" y="38" width="20" height="12" class="bl"/></g>
<g transform="translate(3467 1203)"><path d="M2 6H54V38H20L10 50V38H2Z" fill="#f7f7f7" stroke="#1f77c0" stroke-width="3.500"/></g>
<g transform="translate(3547 1203)"><path class="a" d="M8 12V2H34L50 14V52H8V36"/><path class="a" d="M34 2V14H50"/><ellipse cx="8" cy="24" rx="7" ry="4" class="bl"/><path class="li" d="M18 24H36M16 36H40"/></g>
<g transform="translate(3627 1203)"><path class="a" d="M12 6H2V16Q6 26 16 28M42 6H54V16Q50 26 40 28"/><path d="M12 4H42V24Q40 32 27 34Q14 32 12 24Z" fill="#f7f7f7" stroke="#444" stroke-width="3"/><path d="M12 4H42V10H12Z" fill="#85bcec" stroke="#1f77c0" stroke-width="3"/><path d="M27 34V44" stroke="#444" stroke-width="3"/><path class="bl" d="M12 52Q14 44 27 44Q40 44 42 52Z"/></g>
<g transform="translate(3707 1203)"><path class="a" d="M4 52V2H32L50 14V52ZM32 2V14H50"/><rect x="12" y="34" width="7" height="14" fill="#333"/><rect x="24" y="40" width="7" height="8" fill="#333"/><rect x="36" y="26" width="7" height="22" fill="#333"/></g>
<g transform="translate(3787 1203)"><path d="M4 52V22H14V42H26V32L36 24V12H44" fill="none" stroke="#1f77c0" stroke-width="7"/><path d="M4 52H30L42 42V30L52 22V4H30" fill="none" stroke="#1f77c0" stroke-width="3"/><path d="M-4 0H18V16L8 24L-4 14Z" fill="#d96b00"/><circle cx="7" cy="8" r="3.500" fill="#fff"/><ellipse cx="47" cy="46" rx="11" ry="7" fill="#d96b00"/><circle cx="54" cy="32" r="5" fill="#d96b00"/></g>

<g transform="translate(3386 1283)" fill="none" stroke="#a23ab0" stroke-width="3.500"><path d="M2 27L24 5H34L54 27L34 49H24ZM16 14L40 38M38 14L14 38M22 28L30 20M30 36L38 28"/></g>
<g transform="translate(3467 1283)" fill="none" stroke="#1a86dc" stroke-width="3.500"><path d="M2 4H36L54 25L36 46H2L22 25ZM10 32L30 8M24 40L44 16"/></g>
<circle cx="3560" cy="1307" r="3" fill="#222"/><circle cx="3574" cy="1307" r="3" fill="#222"/><circle cx="3588" cy="1307" r="3" fill="#222"/>

<!-- field icons -->
<use href="#cv" x="3774" y="1492"/><use href="#xx" x="3820" y="1491"/>
<use href="#cv" x="3774" y="1561"/><use href="#xx" x="3820" y="1560"/>
<use href="#cv" x="3774" y="1630"/><use href="#xx" x="3820" y="1631"/>
<use href="#cv" x="3774" y="1699"/><use href="#xx" x="3820" y="1699"/>
<use href="#cv" x="3774" y="1770"/><use href="#xx" x="3820" y="1769"/>
<path d="M3735 2029L3744 2039L3760 2022" fill="none" stroke="#fff" stroke-width="4"/>

<!-- data tree -->
<use href="#cv" x="3927" y="735"/><use href="#cv" x="3927" y="1081"/><use href="#cv" x="3927" y="1562"/>
<use href="#tb" x="3956" y="720"/><use href="#bd" x="3991" y="755"/>
<use href="#tb" x="3956" y="1065"/><use href="#bd" x="3991" y="1098"/>
<use href="#tb" x="3956" y="1546"/>
<use href="#cb" x="4016" y="807"/><use href="#cb" x="4016" y="875"/><use href="#cb" x="4016" y="1013"/><use href="#cb" x="4016" y="1150"/><use href="#cb" x="4016" y="1425"/><use href="#cb" x="4016" y="1631"/><use href="#cb" x="4016" y="1700"/>
<use href="#ck" x="4016" y="945"/><use href="#ck" x="4016" y="1219"/><use href="#ck" x="4016" y="1288"/><use href="#ck" x="4016" y="1358"/><use href="#ck" x="4016" y="1494"/>
<use href="#sg" x="4074" y="1013"/><use href="#sg" x="4074" y="1219"/><use href="#sg" x="4074" y="1288"/><use href="#sg" x="4074" y="1356"/><use href="#sg" x="4074" y="1494"/><use href="#sg" x="4074" y="1700"/>
</svg>

<!-- annotations -->
<div class="red" style="left:1072px;top:8px;width:104px;height:95px"></div>
<div class="red" style="left:3977px;top:907px;width:73px;height:75px"></div>
<div class="red" style="left:3977px;top:1182px;width:73px;height:198px"></div>
<div class="red" style="left:3977px;top:1462px;width:73px;height:77px"></div>
<div class="red" style="left:3719px;top:2399px;width:467px;height:79px"></div>
<div class="circ" style="left:1217px;top:15px;height:167px"><span>5</span></div>
<div class="circ" style="left:4188px;top:869px;height:165px"><span>1</span></div>
<div class="circ" style="left:4188px;top:1194px;height:166px"><span>3</span></div>
<div class="circ" style="left:4188px;top:1466px;height:167px"><span>2</span></div>
<div class="circ" style="left:3991px;top:2220px;height:167px;width:167px"><span>4</span></div>
</body></html>
